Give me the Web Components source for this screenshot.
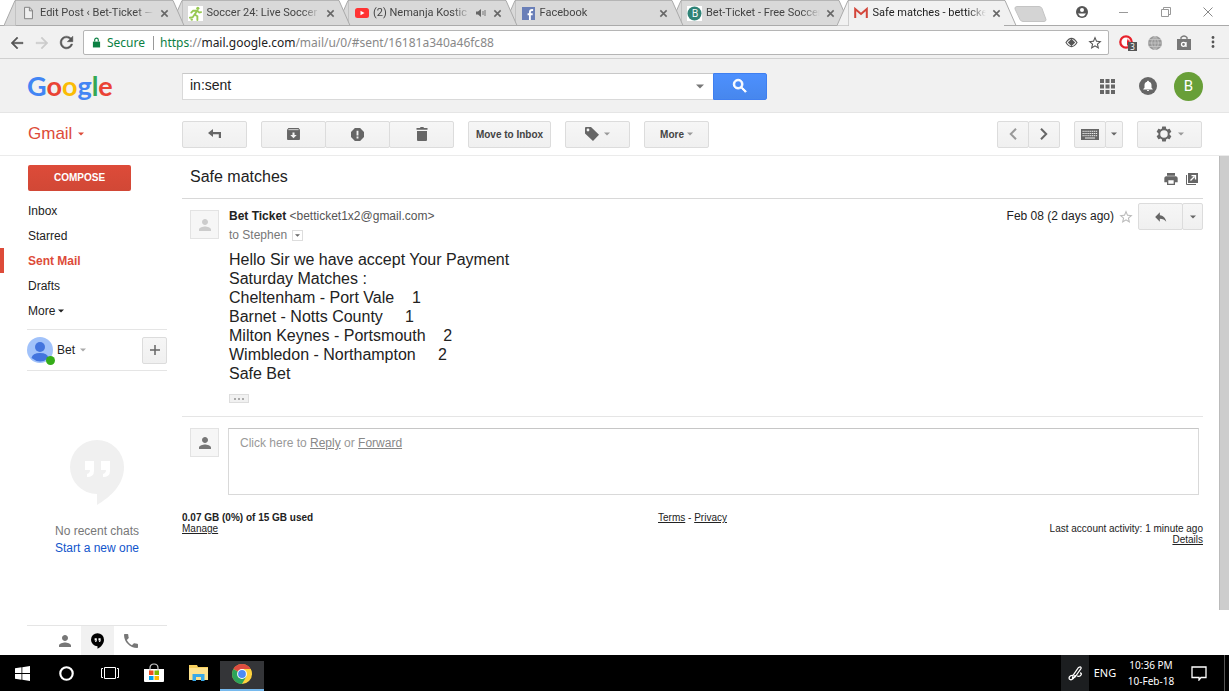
<!DOCTYPE html>
<html lang="en">
<head>
<meta charset="utf-8">
<meta name="viewport" content="width=device-width, initial-scale=1">
<title>Safe matches</title>
<style>
  html, body { margin: 0; background: #fff; }
  body { font-family: "Liberation Sans", Arial, sans-serif; font-size: 12px; color: #222; }
</style>
</head>
<body>
<desktop-screen></desktop-screen>
<script>
const ICONS = {
  page: ['0 0 12 16', '<path d="M1.5 1.5h6l3 3.5v9.500h-9zM7 2v3.500h3.500" fill="#efefef" stroke="#777"/>'],
  runner: ['0 0 16 16', '<path fill="#fff" d="M0 0h16v16H0z"/><g fill="none" stroke="#97c951" stroke-width="2" stroke-linecap="round"><path d="M10 5l-3 4 3 2v4M7 9l-2 3-3 .500M9.500 5l-4 0-2 2M10 5l2 2 2-.500"/></g><circle cx="10.500" cy="2.500" r="1.700" fill="#97c951"/><circle cx="4" cy="14.500" r="1.300" fill="#97c951"/>'],
  youtube: ['0 0 14 12', '<rect y="1" width="14" height="10" rx="2.500" fill="#f33"/><path d="M5.500 3.700v4.600L9.500 6z" fill="#fff"/>'],
  facebook: ['0 0 14 14', '<path fill="#6a7fb8" d="M0 0h14v14H0z"/><path d="M12 3.300c-3-.400-3.500.700-3.500 2.700v8M6 7.800h5.500" fill="none" stroke="#fff" stroke-width="2"/>'],
  gmail: ['0 0 14 12', '<path d="M1 1h12v10H1z" fill="#eee"/><path d="M1.200 11V2L7 7l5.800-5v9" fill="none" stroke="#d3453a" stroke-width="2"/>'],
  sound: ['0 0 12 10', '<path d="M1 3.500h2L6 1v8L3 6.500H1z" fill="#666"/><path d="M8 3v4M10 2v6" stroke="#777"/>'],
  close: ['0 0 10 10', '<path d="M1.500 1.500l7 7m0-7l-7 7" stroke="#666" stroke-width="1.700"/>'],
  back: ['0 0 24 24', '<path stroke="currentColor" stroke-width=".600" d="M20 11H7.830l5.590-5.590L12 4l-8 8 8 8 1.410-1.410L7.830 13H20v-2z"/>'],
  forward: ['0 0 24 24', '<path stroke="currentColor" stroke-width=".600" d="M4 11h12.200l-5.600-5.600L12 4l8 8-8 8-1.400-1.400 5.600-5.600H4z"/>'],
  reload: ['0 0 24 24', '<path stroke="currentColor" stroke-width=".600" d="M17.650 6.350C16.200 4.900 14.210 4 12 4c-4.420 0-7.990 3.580-7.990 8s3.570 8 7.990 8c3.730 0 6.840-2.550 7.730-6h-2.080c-.820 2.330-3.040 4-5.650 4-3.310 0-6-2.690-6-6s2.690-6 6-6c1.660 0 3.140.690 4.220 1.780L13 11h7V4l-2.350 2.350z"/>'],
  lock: ['0 0 10 12', '<path d="M1 5h8v6.500H1z"/><path d="M3 5V3.200a2 2 0 0 1 4 0V5" fill="none" stroke="currentColor" stroke-width="1.300"/>'],
  eye: ['0 0 14 12', '<path d="M1 6q6-9 12 0-6 9-12 0z" fill="none" stroke="currentColor" stroke-width="1.200"/><path d="M7 2l4 4-4 4-4-4z"/>'],
  star: ['0 0 24 24', '<path d="M22 9.240l-7.190-.620L12 2 9.190 8.630 2 9.240l5.460 4.730L5.820 21 12 17.270 18.180 21l-1.630-7.030L22 9.240zM12 15.400l-3.760 2.270 1-4.280-3.320-2.880 4.380-.380L12 6.100l1.710 4.040 4.380.380-3.320 2.880 1 4.280L12 15.400z"/>'],
  adblock: ['0 0 14 14', '<circle cx="7" cy="7" r="5.700" fill="#fff" stroke="#e8222c" stroke-width="2.300"/><path d="M8 3l1 3 1-2 1 4-3 3z" fill="#e8222c"/>'],
  globe: ['0 0 16 16', '<circle cx="8" cy="8" r="7" fill="#999"/><path d="M1 8h14M8 1v14M2 4.500h12M2 11.500h12M8 1q-7 7 0 14 7-7 0-14" fill="none" stroke="#c8c8c8" stroke-width=".800"/>'],
  bag: ['0 0 16 16', '<path d="M1 4h14v11H1z" fill="#777"/><path d="M5 4V2.500q3-3 6 0V4" fill="none" stroke="#777" stroke-width="1.300"/><circle cx="7.500" cy="9.300" r="2" fill="none" stroke="#fff" stroke-width="1.300"/><path d="M10 7v5" stroke="#fff" stroke-width="1.300"/>'],
  dots: ['0 0 4 14', '<circle cx="2" cy="2.500" r="1.400"/><circle cx="2" cy="7" r="1.400"/><circle cx="2" cy="11.500" r="1.400"/>'],
  account: ['0 0 14 14', '<circle cx="7" cy="7" r="6" fill="#555"/><circle cx="7" cy="5" r="2" fill="#fff"/><path d="M3 8.500h8q-1.500 3-4 3t-4-3z" fill="#fff"/>'],
  minimize: ['0 0 10 10', '<path d="M0 5.500h9" stroke="#999"/>'],
  restore: ['0 0 10 10', '<path d="M.500 2.500h7v7h-7zM2.500 2V.500h7v7H8" fill="none" stroke="#999"/>'],
  shut: ['0 0 10 10', '<path d="M.500.500l9 9m0-9l-9 9" stroke="#888"/>'],
  search: ['0 0 24 24', '<path stroke="currentColor" stroke-width="1.300" d="M15.500 14h-.790l-.280-.270C15.410 12.590 16 11.110 16 9.500 16 5.910 13.090 3 9.500 3S3 5.910 3 9.500 5.910 16 9.500 16c1.610 0 3.090-.590 4.230-1.570l.270.280v.790l5 4.990L20.490 19l-4.990-5zm-6 0C7.010 14 5 11.990 5 9.500S7.010 5 9.500 5 14 7.010 14 9.500 11.990 14 9.500 14z"/>'],
  apps: ['0 0 15 15', '<path d="M0 0h4v4H0zM5.500 0h4v4h-4zM11 0h4v4h-4zM0 5.500h4v4H0zM5.500 5.500h4v4h-4zM11 5.500h4v4h-4zM0 11h4v4H0zM5.500 11h4v4h-4zM11 11h4v4h-4z"/>'],
  bell: ['0 0 18 18', '<circle cx="9" cy="9" r="9"/><path fill="#fff" d="M9 3.800c.700 0 1 .500 1 1 1.800.500 2.500 1.700 2.500 3.400v2.600l1.200 1.200v.500H4.300V12l1.200-1.200V8.200C5.500 6.500 6.200 5.300 8 4.800c0-.500.300-1 1-1zM7.900 13h2.200c0 1.400-2.200 1.400-2.200 0z"/>'],
  caret: ['0 0 8 4', '<path d="M0 0h8L4 4z"/>'],
  undo: ['0 0 13 10', '<path d="M0 4l5-4v3h8v6h-2.200V5.200H5V8z"/>'],
  archive: ['0 0 14 13', '<path fill-rule="evenodd" d="M1.500 0h11L14 2v10q0 1-1 1H1q-1 0-1-1V2zM2 1.600h10M5.900 5v2.500H3.500L7 11l3.500-3.500H8.100V5z"/><path d="M1.500 1.800h11" stroke="#ddd"/>'],
  spam: ['0 0 14 14', '<path d="M4.200 0h5.600L14 4.200v5.600L9.800 14H4.200L0 9.800V4.200z"/><path d="M6 3h2v5H6zM6 9.200h2v2H6z" fill="#f3f3f3"/>'],
  trash: ['0 0 12 14', '<path d="M1 4h10v9q0 1-1 1H2q-1 0-1-1zM.500 1H4l.600-1h2.800L8 1h3.500v1.700H.500z"/>'],
  tag: ['0 0 14 14', '<path fill-rule="evenodd" d="M0 1q0-1 1-1h5l8 7.800L8 14 0 6.500zM3 1.600a1.400 1.400 0 1 0 0 2.800 1.400 1.400 0 0 0 0-2.800z"/>'],
  left: ['0 0 8 12', '<path d="M7 .800L1.800 6 7 11.200" fill="none" stroke="currentColor" stroke-width="2"/>'],
  right: ['0 0 8 12', '<path d="M1 .800L6.200 6 1 11.200" fill="none" stroke="currentColor" stroke-width="2"/>'],
  keyboard: ['0 0 18 11', '<path d="M0 0h18v11H0z"/><path d="M1.500 2.300h15M1.500 4.500h15M1.500 6.700h15" stroke="#eee" stroke-dasharray="1.300 .600"/><path d="M4 9h10" stroke="#eee"/>'],
  gear: ['0 0 24 24', '<path fill-rule="evenodd" d="M19.430 12.980c.040-.320.070-.640.070-.980s-.030-.660-.070-.980l2.110-1.650c.190-.150.240-.420.120-.640l-2-3.460c-.120-.220-.390-.300-.610-.220l-2.490 1c-.520-.400-1.080-.730-1.690-.980l-.380-2.650C14.460 2.180 14.250 2 14 2h-4c-.250 0-.460.180-.490.420l-.380 2.650c-.610.250-1.170.590-1.690.980l-2.490-1c-.230-.090-.490 0-.610.220l-2 3.460c-.130.220-.070.490.120.640l2.110 1.650c-.040.320-.070.650-.070.980s.030.660.070.980l-2.110 1.650c-.190.150-.240.420-.120.640l2 3.460c.120.220.390.300.610.220l2.490-1c.520.400 1.080.730 1.690.980l.380 2.650c.030.240.240.420.490.420h4c.250 0 .460-.180.490-.420l.380-2.650c.610-.250 1.170-.590 1.690-.980l2.490 1c.230.090.490 0 .610-.220l2-3.460c.120-.220.070-.490-.120-.640l-2.110-1.650zM12 17a5 5 0 1 1 0-10 5 5 0 0 1 0 10z"/>'],
  print: ['0 0 24 24', '<path d="M19 8H5c-1.660 0-3 1.340-3 3v6h4v4h12v-4h4v-6c0-1.660-1.340-3-3-3zm-3 11H8v-5h8v5zM18 3H6v4h12V3z"/>'],
  popout: ['0 0 12 12', '<path d="M2 0h10v10H2z"/><path d="M.500 2v9.500H10" fill="none" stroke="currentColor"/><path d="M4.500 7.500l4-4M5.500 2.600h4v4" fill="none" stroke="#fff" stroke-width="1.300"/>'],
  reply: ['0 0 24 24', '<path d="M10 9V4l-8 8 8 8v-5.100c5 0 8.500 1.600 11 5.100-1-5-4-10-11-11z"/>'],
  person: ['4 4 16 16', '<path d="M12 12c2.210 0 4-1.790 4-4s-1.790-4-4-4-4 1.790-4 4 1.790 4 4 4zm0 2c-2.670 0-8 1.340-8 4v2h16v-2c0-2.660-5.330-4-8-4z"/>'],
  profile: ['0 0 26 26', '<circle cx="13" cy="13" r="13" fill="#a1c2fa"/><circle cx="13" cy="10" r="5" fill="#4274de"/><path d="M4.500 21q1-5 8.500-5t8.500 5q-8 7-17 0z" fill="#4274de"/>'],
  plus: ['0 0 10 10', '<path d="M5 0v10M0 5h10" stroke="currentColor" stroke-width="1.500"/>'],
  hangouts: ['0 0 54 65', '<path d="M27 0a27 27 0 0 0 0 54v11C42 56 54 44 54 27A27 27 0 0 0 27 0z"/><path d="M15 21h9v10q0 6-7 6v-3q3-1 3-4h-5zM31 21h9v10q0 6-7 6v-3q3-1 3-4h-5z" fill="#fff"/>'],
  phone: ['3 3 18 18', '<path d="M6.620 10.790c1.440 2.830 3.760 5.140 6.590 6.590l2.200-2.200c.270-.270.670-.360 1.020-.240 1.120.370 2.330.570 3.570.570.550 0 1 .450 1 1V20c0 .550-.450 1-1 1-9.390 0-17-7.610-17-17 0-.550.450-1 1-1h3.500c.550 0 1 .450 1 1 0 1.250.200 2.450.570 3.570.110.350.030.740-.250 1.020l-2.200 2.200z"/>'],
  windows: ['0 0 15 15', '<path d="M0 2.200L6.500 1.300v5.800H0zM7.300 1.200L15 0v7.100H7.300zM0 7.900h6.500v5.800L0 12.800zM7.300 7.900H15V15l-7.700-1.200z"/>'],
  ring: ['0 0 14 14', '<circle cx="7" cy="7" r="5.800" fill="none" stroke="currentColor" stroke-width="2"/>'],
  taskview: ['0 0 18 14', '<path d="M3.500 1.500h11v11h-11zM2 2.500H.500v9H2M16 2.500h1.500v9H16" fill="none" stroke="currentColor"/>'],
  store: ['0 0 20 20', '<path d="M0 6h20v12q0 1-1 1H1q-1 0-1-1z"/><path d="M6 8V5q0-4 4-4t4 4v3" fill="none" stroke="#ccc" stroke-width="1.200"/><path fill="#f04e1f" d="M5 7.500h4.500V12H5z"/><path fill="#7fba00" d="M10.500 7.500H15V12h-4.500z"/><path fill="#00a2ed" d="M5 13h4.500v4H5z"/><path fill="#fdb900" d="M10.500 13H15v4h-4.500z"/>'],
  folder: ['0 0 19 16', '<path d="M0 0h8l1 2h10v13H0z" fill="#f7cf5d"/><path d="M0 3h19v12H0z" fill="#fde28e"/><path d="M3.500 16V9h12v7H12v-4H7v4z" fill="#39a9e8"/>'],
  chrome: ['0 0 20 20', '<circle cx="10" cy="10" r="10" fill="#fdd23e"/><path d="M10 10L1.340 5A10 10 0 0 1 18.660 5z" fill="#dd4c40"/><path d="M10 10L1.340 5A10 10 0 0 0 10 20l4.300-7.500z" fill="#2da45a"/><path d="M10 5h8.660q1.500 2.500 1.300 6l-5.660 1.500z" fill="#fdd23e"/><circle cx="10" cy="10" r="4.900" fill="#fff"/><circle cx="10" cy="10" r="3.900" fill="#4c8bf5"/>'],
  pen: ['0 0 15 15', '<path d="M10.500 1.500q3-1.500 2.500 1l-6 8.500-2.500 1.500.500-3zM5 9.500C1.500 9 0 12.500 2 13.500s5-2 5-4.500M9 10q3 1 4-1 1-2-1-2" fill="none" stroke="currentColor" stroke-width="1.300"/>'],
  notice: ['0 0 16 16', '<path d="M1 2h14v10.500h-5L8 15v-2.500H1z" fill="none" stroke="currentColor" stroke-width="1.300"/>']
};

function define(name, html, setup) {
  const template = document.createElement('template');
  template.innerHTML = html;
  customElements.define(name, class extends HTMLElement {
    connectedCallback() {
      if (this.shadowRoot) return;
      this.attachShadow({ mode: 'open' }).append(template.content.cloneNode(true));
      if (setup) setup(this, this.shadowRoot);
    }
  });
}

/* <ui-icon name w h>: inline SVG, coloured by currentColor */
define('ui-icon', `<style>:host{display:inline-flex;flex:none} svg{display:block;fill:currentColor}</style>`, (el, root) => {
  const [box, body] = ICONS[el.getAttribute('name')];
  const w = el.getAttribute('w'), h = el.getAttribute('h') || w;
  root.innerHTML += `<svg viewBox="${box}" width="${w}" height="${h}" aria-hidden="true">${body}</svg>`;
});

define('browser-tab', `<style>
  :host{display:flex;flex:1 1 0;min-width:0;position:relative;height:26px;margin-right:-14px;--fill:#d9d9d9}
  :host([active]){--fill:#f1f1f1;z-index:10}
  .edge{flex:none;display:block}
  .edge path{fill:var(--fill);stroke:#aaa}
  .mid{flex:1;min-width:0;display:flex;align-items:center;background:var(--fill);border-top:1px solid #b5b5b5;border-bottom:1px solid #aaa;box-sizing:border-box;padding:0 2px 0 5px;color:#444}
  :host([active]) .mid{border-bottom-color:#f1f1f1;color:#222}
  .ico{width:15px;display:flex;justify-content:center;margin-right:4px}
  .title{flex:1;min-width:0;overflow:hidden;white-space:nowrap;font:11px/20px Roboto,"Noto Sans",sans-serif;-webkit-mask-image:linear-gradient(90deg,#000 calc(100% - 18px),transparent);mask-image:linear-gradient(90deg,#000 calc(100% - 18px),transparent)}
  button{border:0;background:none;padding:0;margin:0 1px 0 6px;display:flex;color:#666}
  ::slotted([slot=status]){margin-left:4px}
</style>
<svg class="edge" width="12" height="26" aria-hidden="true"><path d="M0 25.500L11 .500h1V25.500" /></svg>
<div class="mid"><span class="ico"><slot name="icon"></slot></span><span class="title"><slot></slot></span><slot name="status"></slot><button aria-label="Close tab"><ui-icon name="close" w="9"></ui-icon></button></div>
<svg class="edge" width="13" height="26" aria-hidden="true"><path d="M0 .500h1L12 25.500H0"/></svg>`);

define('tab-strip', `<style>
  :host{display:flex;background:#fff;height:26px;padding-left:4px;box-shadow:inset 0 -1px #aaa}
  .tabs{flex:0 1 999px;display:flex;min-width:0}
  browser-tab:nth-child(1){z-index:6} browser-tab:nth-child(2){z-index:5} browser-tab:nth-child(3){z-index:4} browser-tab:nth-child(4){z-index:3} browser-tab:nth-child(5){z-index:2}
  .new{border:0;background:none;padding:0;margin:6px 0 0 11px;align-self:flex-start}
  .new svg{display:block}
  .grow{flex:1}
  .win{width:42px;display:flex;align-items:center;justify-content:center;border:0;background:none;padding:0;height:24px}
</style>
<div class="tabs">
  <browser-tab><ui-icon slot="icon" name="page" w="11" h="14"></ui-icon>Edit Post ‹ Bet-Ticket — WordPress</browser-tab>
  <browser-tab><ui-icon slot="icon" name="runner" w="15"></ui-icon>Soccer 24: Live Soccer Scores</browser-tab>
  <browser-tab><ui-icon slot="icon" name="youtube" w="14" h="12"></ui-icon>(2) Nemanja Kostic - YouTube<ui-icon slot="status" name="sound" w="12" h="10"></ui-icon></browser-tab>
  <browser-tab><ui-icon slot="icon" name="facebook" w="13"></ui-icon>Facebook</browser-tab>
  <browser-tab><svg slot="icon" width="15" height="15"><path fill="#fff" d="M0 0h15v15H0z"/><circle cx="7.500" cy="7.500" r="7" fill="#2f8377"/><text x="8" y="11" font-size="10" text-anchor="middle" fill="#fff" font-family="Open Sans">B</text></svg>Bet-Ticket - Free Soccer Tips</browser-tab>
  <browser-tab active><ui-icon slot="icon" name="gmail" w="14" h="12"></ui-icon>Safe matches - betticket1x2</browser-tab>
</div>
<button class="new" aria-label="New tab"><svg width="33" height="17"><path d="M3 .500h22q2 0 3 2l4 11q0 2-2 2H9q-2 0-3-2L1 3Q.500.500 3 .500z" fill="#d4d4d4" stroke="#c4c4c4"/></svg></button>
<span class="grow"></span>
<button class="win" aria-label="Account"><ui-icon name="account" w="14"></ui-icon></button>
<button class="win" aria-label="Minimize"><ui-icon name="minimize" w="10"></ui-icon></button>
<button class="win" aria-label="Restore"><ui-icon name="restore" w="10"></ui-icon></button>
<button class="win" aria-label="Close"><ui-icon name="shut" w="10"></ui-icon></button>`);

define('address-bar', `<style>
  :host{display:flex;align-items:center;height:33px;box-sizing:border-box;background:#f1f1f1;border-bottom:1px solid #d0d0d0;padding:1px 0 0 4px;color:#555}
  button{border:0;background:none;padding:0;width:25px;display:flex;justify-content:center;color:inherit;position:relative}
  .off{color:#ccc}
  .box{flex:1;min-width:0;display:flex;align-items:center;height:25px;box-sizing:border-box;margin-left:4px;background:#fff;border:1px solid #b5b5b5;border-radius:2px;padding:0 2px 0 8px;font:12px/20px "Noto Sans","Open Sans",sans-serif;color:#888}
  .secure{color:#0b8043;padding:0 8px 0 6px;border-right:1px solid #999;line-height:14px}
  .url{flex:1;min-width:0;overflow:hidden;white-space:nowrap;padding-left:6px;outline:0}
  .s{color:#0b8043}.h{color:#222}
  .box button{width:23px;color:#555}
  .ext{display:flex;padding:0 2px}
  .ext button{width:29px}
  .count{position:absolute;left:17px;top:7px;width:9px;height:9px;background:#555;color:#fff;font:8px/9px "Noto Sans",sans-serif;text-align:center}
</style>
<button aria-label="Back"><ui-icon name="back" w="18"></ui-icon></button>
<button class="off" aria-label="Forward"><ui-icon name="forward" w="18"></ui-icon></button>
<button aria-label="Reload"><ui-icon name="reload" w="19"></ui-icon></button>
<div class="box"><ui-icon class="s" name="lock" w="9" h="11"></ui-icon><span class="secure">Secure</span>
<span class="url" role="textbox" contenteditable="true" spellcheck="false" aria-label="Address"><span class="s">https</span>://<span class="h">mail.google.com</span>/mail/u/0/#sent/16181a340a46fc88</span>
<button aria-label="View"><ui-icon name="eye" w="13" h="11"></ui-icon></button><button aria-label="Bookmark"><ui-icon name="star" w="16"></ui-icon></button></div>
<div class="ext"><button aria-label="Ad blocker"><ui-icon name="adblock" w="14"></ui-icon><span class="count">3</span></button><button aria-label="Translate"><ui-icon name="globe" w="16"></ui-icon></button><button aria-label="Shopping"><ui-icon name="bag" w="16"></ui-icon></button><button aria-label="Menu"><ui-icon name="dots" w="4" h="14"></ui-icon></button></div>`);

define('app-header', `<style>
  :host{display:flex;align-items:center;height:54px;box-sizing:border-box;background:#f1f1f1;border-bottom:1px solid #e5e5e5;padding:1px 26px 0 0}
  .logo{width:155px;padding-left:27px;flex:none;font:bold 27px/30px Lato,sans-serif;text-decoration:none}
  .b{color:#4285f4}.r{color:#ea4335}.y{color:#fbbc05}.g{color:#34a853}
  form{flex:0 1 585px;display:flex;height:27px}
  .field{flex:1;min-width:0;display:flex;align-items:center;background:#fff;border:1px solid #d9d9d9;border-top-color:#c8c8c8;border-right:0;padding-right:9px}
  input{flex:1;min-width:0;border:0;outline:0;background:none;padding:0 7px 2px;font:14px "Liberation Sans",Arial,sans-serif;color:#222}
  .field button{border:0;background:none;padding:0;display:flex;color:#777}
  .go{width:54px;border:1px solid #3f7ff0;border-radius:0 2px 2px 0;background:linear-gradient(#4d90fe,#4787ed);color:#fff;display:flex;align-items:center;justify-content:center;padding:0}
  .grow{flex:1}
  .ic{border:0;background:none;padding:0;margin-right:24px;display:flex;color:#666}
  .ic+.ic{margin-right:17px}
  .me{width:29px;height:29px;border:0;border-radius:50%;background:#689f38;color:#fff;font:15px/29px Roboto,sans-serif;padding:0}
</style>
<a class="logo" href="#" aria-label="Google"><span class="b">G</span><span class="r">o</span><span class="y">o</span><span class="b">g</span><span class="g">l</span><span class="r">e</span></a>
<form onsubmit="return false"><div class="field"><input aria-label="Search mail" value="in:sent"><button type="button" aria-label="Search options"><ui-icon name="caret" w="8" h="5"></ui-icon></button></div><button class="go" aria-label="Search"><ui-icon name="search" w="18"></ui-icon></button></form>
<span class="grow"></span>
<button class="ic" aria-label="Apps"><ui-icon name="apps" w="15"></ui-icon></button>
<button class="ic" aria-label="Notifications"><ui-icon name="bell" w="18"></ui-icon></button>
<button class="me">B</button>`);

/* Grey push button; siblings marked "joined" share one border */
define('gm-button', `<style>
  :host{display:block;flex:none;width:65px}
  :host([joined]){margin-left:-1px}
  :host([size=half]){width:32px}
  :host([size=slim]){width:18px}
  :host([size=text]){width:83px}
  :host([size=reply]){width:45px}
  :host([size=drop]){width:21px}
  :host([size=square]){width:25px}
  button{width:100%;height:27px;box-sizing:border-box;border:1px solid #dcdcdc;border-radius:2px;background:linear-gradient(#f6f6f6,#f0f0f0);padding:0;display:flex;align-items:center;justify-content:center;gap:5px;font:bold 10px "Liberation Sans",Arial,sans-serif;color:#444;white-space:nowrap}
  ::slotted(ui-icon){color:#666}
  ::slotted(.dim){color:#999}
</style><button><slot></slot></button>`, (el, root) => {
  const label = el.getAttribute('label');
  if (label) root.querySelector('button').setAttribute('aria-label', label);
});

define('mail-toolbar', `<style>
  :host{display:flex;align-items:center;height:43px;box-sizing:border-box;border-bottom:1px solid #ebebeb;padding-right:27px}
  .brand{flex:none;width:154px;padding-left:28px;display:flex;align-items:center;gap:6px;color:#dd4b39;font-size:17px;text-decoration:none}
  .set{display:flex;gap:14px}
  .row{display:flex}
  .grow{flex:1}
</style>
<a class="brand" href="#">Gmail <ui-icon name="caret" w="6" h="4"></ui-icon></a>
<div class="set">
  <gm-button label="Back"><ui-icon name="undo" w="13" h="10"></ui-icon></gm-button>
  <div class="row"><gm-button label="Archive"><ui-icon name="archive" w="13" h="12"></ui-icon></gm-button><gm-button joined label="Spam"><ui-icon name="spam" w="13"></ui-icon></gm-button><gm-button joined label="Delete"><ui-icon name="trash" w="12" h="14"></ui-icon></gm-button></div>
  <gm-button size="text">Move to Inbox</gm-button>
  <gm-button label="Labels"><ui-icon name="tag" w="14"></ui-icon><ui-icon class="dim" name="caret" w="6" h="4"></ui-icon></gm-button>
  <gm-button><span>More</span><ui-icon class="dim" name="caret" w="6" h="4" style="margin-left:-2px"></ui-icon></gm-button>
</div>
<span class="grow"></span>
<div class="set">
  <div class="row"><gm-button size="half" label="Newer"><ui-icon class="dim" name="left" w="8" h="12"></ui-icon></gm-button><gm-button size="half" joined label="Older"><ui-icon name="right" w="8" h="12"></ui-icon></gm-button></div>
  <div class="row"><gm-button size="half" label="Input tools"><ui-icon name="keyboard" w="18" h="11"></ui-icon></gm-button><gm-button size="slim" joined label="Select input tool"><ui-icon name="caret" w="6" h="4"></ui-icon></gm-button></div>
  <gm-button label="Settings"><ui-icon name="gear" w="18"></ui-icon><ui-icon class="dim" name="caret" w="6" h="4"></ui-icon></gm-button>
</div>`);

define('side-nav', `<style>
  :host{display:flex;flex-direction:column;flex:none;width:182px;box-sizing:border-box;padding-right:15px}
  .compose{align-self:flex-start;width:103px;height:26px;margin:9px 0 7px 28px;border:0;border-radius:2px;background:linear-gradient(#dd4b39,#d14836);color:#fff;font:bold 10px "Liberation Sans",Arial,sans-serif;padding:0 0 2px}
  a{text-decoration:none;color:#222}
  nav a{display:flex;align-items:center;gap:3px;height:25px;box-sizing:border-box;border-left:4px solid transparent;padding-left:24px}
  nav a.on{color:#dd4b39;border-left-color:#dd4b39;font-weight:bold}
  .user{display:flex;align-items:center;height:42px;box-sizing:border-box;margin:6px 0 0 27px;border-top:1px solid #e5e5e5;border-bottom:1px solid #e5e5e5}
  .pic{position:relative;display:flex;margin-right:4px}
  .pic i{position:absolute;right:-2px;bottom:-2px;width:9px;height:9px;border-radius:50%;background:#35ac19}
  .user ui-icon.dim{color:#aaa;margin-left:5px}
  .grow{flex:1}
  .empty{margin:69px 0 0 27px;display:flex;flex-direction:column;align-items:center;line-height:17px;color:#777}
  .empty ui-icon{color:#f0f0f0;margin-bottom:18px}
  .empty a{color:#15c}
  .kinds{display:flex;margin:auto 0 0 27px;border-top:1px solid #e5e5e5;height:29px;padding-left:21px}
  .kinds button{width:33px;border:0;background:none;padding:0;display:flex;align-items:center;justify-content:center;color:#777}
  .kinds button.on{background:#f1f1f1;color:#000}
</style>
<button class="compose">COMPOSE</button>
<nav><a href="#">Inbox</a><a href="#">Starred</a><a href="#" class="on">Sent Mail</a><a href="#">Drafts</a><a href="#">More<ui-icon name="caret" w="6" h="4"></ui-icon></a></nav>
<div class="user"><span class="pic"><ui-icon name="profile" w="26"></ui-icon><i></i></span>Bet<ui-icon class="dim" name="caret" w="6" h="4"></ui-icon><span class="grow"></span><gm-button size="square" label="New conversation"><ui-icon name="plus" w="10"></ui-icon></gm-button></div>
<div class="empty"><ui-icon name="hangouts" w="54" h="65"></ui-icon><span>No recent chats</span><a href="#">Start a new one</a></div>
<div class="kinds"><button aria-label="Contacts"><ui-icon name="person" w="12"></ui-icon></button><button class="on" aria-label="Hangouts"><ui-icon name="hangouts" w="13" h="16"></ui-icon></button><button aria-label="Phone"><ui-icon name="phone" w="14"></ui-icon></button></div>`);

define('user-tile', `<style>:host{display:flex;flex:none;width:29px;height:29px;box-sizing:border-box;border:1px solid #e3e3e3;background:#f6f6f6;align-items:center;justify-content:center;color:#777}:host([faint]){color:#ccc}</style><ui-icon name="person" w="12"></ui-icon>`);

define('message-view', `<style>
  :host{display:block}
  header{display:flex;align-items:center;height:42px;padding:0 3px 0 8px;border-bottom:1px solid #d8d8d8}
  h1{flex:1;margin:0;font-size:16px;font-weight:normal}
  button{border:0;background:none;padding:0;display:flex;color:#666}
  header button{margin:3px 7px 0 0}
  header button+button{margin-right:2px}
  .msg{display:flex;padding:5px 0 13px 8px;border-bottom:1px solid #e5e5e5}
  .msg>user-tile{margin:6px 10px 0 0}
  .col{flex:1;min-width:0}
  .top{display:flex;align-items:center;height:25px}
  .from{flex:1;color:#555}
  .from,time{padding-bottom:2px}
  .from b{color:#222}
  .star{color:#bbb;margin:0 4px}
  .to{display:flex;align-items:center;gap:5px;line-height:12px;color:#777}
  .to button{width:11px;height:11px;box-sizing:border-box;border:1px solid #ddd;align-items:center;justify-content:center}
  .body{font-size:16px;line-height:19px;margin-top:9px;white-space:pre-wrap}
  .more{width:20px;height:9px;box-sizing:border-box;border:1px solid #ddd;background:#f1f1f1;margin-top:11px;align-items:center;justify-content:center;gap:2px}
  .more i{width:2px;height:2px;background:#aaa}
  .reply{display:flex;gap:9px;padding:11px 4px 0 8px}
  .box{flex:1;height:67px;box-sizing:border-box;border:1px solid #d9d9d9;border-top-color:#c6c6c6;padding:7px 11px;color:#999;line-height:14px}
  a{color:#888}
</style>
<header><h1>Safe matches</h1><button aria-label="Print"><ui-icon name="print" w="16"></ui-icon></button><button aria-label="Open in new window"><ui-icon name="popout" w="12"></ui-icon></button></header>
<article class="msg"><user-tile faint></user-tile><div class="col">
  <div class="top"><span class="from"><b>Bet Ticket</b> &lt;betticket1x2@gmail.com&gt;</span><time>Feb 08 (2 days ago)</time><button class="star" aria-label="Star"><ui-icon name="star" w="16"></ui-icon></button><gm-button size="reply" label="Reply"><ui-icon name="reply" w="14"></ui-icon></gm-button><gm-button size="drop" joined label="More actions"><ui-icon name="caret" w="6" h="4"></ui-icon></gm-button></div>
  <div class="to">to Stephen<button aria-label="Show details"><ui-icon name="caret" w="5" h="3"></ui-icon></button></div>
  <div class="body">Hello Sir we have accept Your Payment
Saturday Matches :
Cheltenham - Port Vale &nbsp; &nbsp;1
Barnet - Notts County &nbsp; &nbsp; 1
Milton Keynes - Portsmouth &nbsp; &nbsp;2
Wimbledon - Northampton &nbsp; &nbsp; 2
Safe Bet</div>
  <button class="more" aria-label="Show trimmed content"><i></i><i></i><i></i></button>
</div></article>
<div class="reply"><user-tile></user-tile><div class="box">Click here to <a href="#">Reply</a> or <a href="#">Forward</a></div></div>`);

define('mail-footer', `<style>
  :host{display:grid;grid-template-columns:1fr auto 1fr;font-size:10px;line-height:11px;margin-top:17px}
  a{color:#222}
  .end{text-align:right;padding-top:11px}
</style>
<div><b>0.07 GB (0%) of 15 GB used</b><br><a href="#">Manage</a></div>
<div><a href="#">Terms</a> - <a href="#">Privacy</a></div>
<div class="end">Last account activity: 1 minute ago<br><a href="#">Details</a></div>`);

define('task-bar', `<style>
  :host{display:flex;height:36px;background:#000;color:#fff;font:11px/16px "Noto Sans","Open Sans",sans-serif}
  button{border:0;background:none;padding:0;color:inherit;width:44px;display:flex;align-items:center;justify-content:center;font:inherit;flex:none}
  .on{background:#343538;margin-top:6px;padding-bottom:2px;box-sizing:border-box;border-bottom:2px solid #76b9ed}
  .grow{flex:1}
  .pen{width:28px;background:#1c1e20}
  .lang{width:32px}
  .clock{width:60px;flex-direction:column;font-size:10px}
  .note{width:36px;margin-right:7px}
  .edge{width:4px;border-left:1px solid #555}
</style>
<button aria-label="Start"><ui-icon name="windows" w="15"></ui-icon></button>
<button aria-label="Cortana"><ui-icon name="ring" w="15"></ui-icon></button>
<button aria-label="Task view"><ui-icon name="taskview" w="18" h="14"></ui-icon></button>
<button aria-label="Store"><ui-icon name="store" w="20"></ui-icon></button>
<button aria-label="File Explorer"><ui-icon name="folder" w="19" h="16"></ui-icon></button>
<button class="on" aria-label="Chrome"><ui-icon name="chrome" w="20"></ui-icon></button>
<span class="grow"></span>
<button class="pen" aria-label="Ink workspace"><ui-icon name="pen" w="15"></ui-icon></button>
<button class="lang">ENG</button>
<button class="clock"><span>10:36 PM</span><span>10-Feb-18</span></button>
<button class="note" aria-label="Notifications"><ui-icon name="notice" w="16"></ui-icon></button>
<span class="edge"></span>`);

define('desktop-screen', `<style>
  :host{display:flex;flex-direction:column;min-height:100vh}
  .page{flex:1;display:flex;min-height:0}
  main{flex:1;min-width:0;padding-right:16px}
  .scroll{flex:none;width:10px;display:flex;flex-direction:column}
  .scroll i{flex:10;background:#cdcdcd;border-left:1px solid #bbb}
  .scroll::after{content:"";flex:1}
</style>
<tab-strip></tab-strip><address-bar></address-bar><app-header></app-header><mail-toolbar></mail-toolbar>
<div class="page"><side-nav></side-nav><main><message-view></message-view><mail-footer></mail-footer></main><div class="scroll"><i></i></div></div>
<task-bar></task-bar>`);
</script>
</body>
</html>
